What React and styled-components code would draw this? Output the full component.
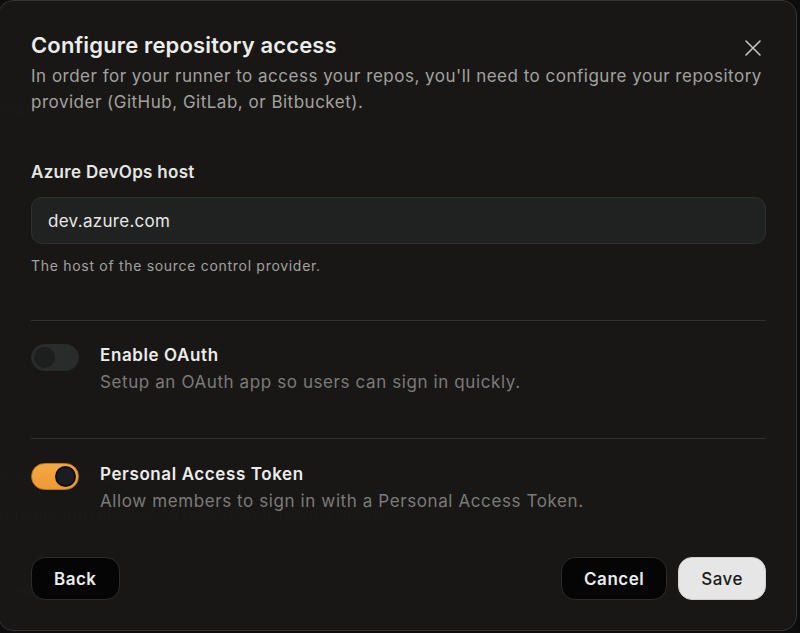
import styled, { createGlobalStyle, css } from "styled-components";

const GlobalStyle = createGlobalStyle`
    html, body { margin : 0; padding : 0; background : #0d0d0d; }
    body { font-family : Inter, "Noto Sans", "Liberation Sans", sans-serif; -webkit-font-smoothing : antialiased; }
`;

const Page = styled.div`
    position : relative; width : 800px; height : 633px; overflow : hidden;
`;
const Backdrop = styled.div`
    display : flex; flex-direction : column;
    padding : 98px 0 0 0; margin-left : -40px;
    color : #2a2a2a; font-size : 17px; line-height : 24px;
`;
const GhostLine = styled.div`
    margin-top : ${(props) => props.$gap || 0}px;
    white-space : nowrap;
`;

const Dialog = styled.div`
    position : absolute; top : 0; left : -2px;
    width : 799px; height : 631px; box-sizing : border-box;
    background : rgba(25, 24, 23, 0.95);
    border : 1px solid #343434; border-radius : 15px;
    padding : 30px 30px 0 32px;
    display : flex; flex-direction : column;
`;
const Header = styled.div`
    position : relative;
    display : flex; flex-direction : column; gap : 4px;
`;
const Title = styled.h2`
    margin : 0; font-size : 22px; line-height : 28px; font-weight : 600;
    color : #ececea; letter-spacing : 0.15px;
`;
const Description = styled.p`
    margin : 0; font-size : 17px; line-height : 26px; color : #a3a29e;
    letter-spacing : 0.5px;
`;
const CloseButton = styled.button`
    position : absolute; top : 5px; right : 1px;
    width : 24px; height : 24px; padding : 0; border : 0; background : none;
    display : flex; align-items : center; justify-content : center; cursor : pointer;
`;

const Field = styled.div`
    display : flex; flex-direction : column; margin-top : 45px;
`;
const Label = styled.label`
    font-size : 17px; line-height : 24px; font-weight : 600; color : #e6e6e4;
    letter-spacing : 0.3px;
`;
const Input = styled.input`
    margin-top : 13px; height : 47px; box-sizing : border-box;
    background : #202221; border : 1px solid #2e3030; border-radius : 11px;
    padding : 0 16px; font-family : inherit; font-size : 17px; color : #e8e8e6;
    letter-spacing : 0.3px; outline : none;
`;
const Helper = styled.div`
    margin-top : 12px; font-size : 14px; line-height : 20px; color : #a3a29e;
    letter-spacing : 0.7px;
`;
const Divider = styled.hr`
    margin : ${(props) => props.$top}px 0 0 0; border : 0; height : 1px; background : #2e3031;
`;
const OptionRow = styled.div`
    display : flex; gap : 21px; margin-top : ${(props) => props.$top}px;
`;
const Toggle = styled.div`
    flex : none; width : 48px; height : 27px; box-sizing : border-box; margin-top : 1px;
    border-radius : 14px; position : relative;
    ${(props) => props.$on ? css`
        background : linear-gradient(#f5a842, #ec9a34);
        border : 1px solid #b87626;
    ` : css`
        background : #2a2c2c;
        border : 1px solid #2a2c2c;
    `}
`;
const Knob = styled.span`
    position : absolute; top : 2px; width : 21px; height : 21px; box-sizing : border-box;
    border-radius : 50%;
    ${(props) => props.$on ? css`
        left : 23px; background : #1c1d20; border : 2px solid #0f0f10;
    ` : css`
        left : 2px; background : #1d1e1e;
    `}
`;
const OptionText = styled.div`
    display : flex; flex-direction : column; gap : 3px;
`;
const OptionTitle = styled.div`
    font-size : 17px; line-height : 24px; font-weight : 600; color : #ececea;
    letter-spacing : 0.6px;
`;
const OptionDesc = styled.div`
    font-size : 17px; line-height : 24px; color : #7c7b78;
    letter-spacing : 0.6px;
`;

const Footer = styled.div`
    display : flex; justify-content : space-between; align-items : center;
    margin-top : 44px;
`;
const Actions = styled.div`
    display : flex; gap : 11px;
`;
const Button = styled.button`
    height : 43px; box-sizing : border-box; padding : 0 22px;
    border-radius : 14px; font-family : inherit; font-size : 17px; cursor : pointer;
    letter-spacing : 0.5px;
    ${(props) => props.$primary ? css`
        background : #e6e6e6; color : #1a1a1a; border : 1px solid #d0d0d0; font-weight : 500;
    ` : css`
        background : #050505; color : #ececec; border : 1px solid #2c2c2c; font-weight : 600;
    `}
`;

const CloseIcon = () => (
    <svg width="18" height="18" viewBox="0 0 18 18" fill="none">
        <path d="M2 2 L16 16 M16 2 L2 16" stroke="#c4c4c2" strokeWidth="1.6" strokeLinecap="round" />
    </svg>
);

const App = () => {
    return (<>
        <GlobalStyle />
        <Page>
            <Backdrop>
                <GhostLine>Personal Access Token</GhostLine>
                <GhostLine $gap={344}>Organization classes</GhostLine>
                <GhostLine $gap={13}>Group users into classes to match your team's needs.</GhostLine>
                <GhostLine $gap={52}>Allow usage</GhostLine>
            </Backdrop>
            <Dialog>
                <Header>
                    <Title>Configure repository access</Title>
                    <Description>
                        In order for your runner to access your repos, you'll need to configure your repository provider (GitHub, GitLab, or Bitbucket).
                    </Description>
                    <CloseButton aria-label="Close"><CloseIcon /></CloseButton>
                </Header>

                <Field>
                    <Label>Azure DevOps host</Label>
                    <Input defaultValue="dev.azure.com" />
                    <Helper>The host of the source control provider.</Helper>
                </Field>

                <Divider $top={44} />
                <OptionRow $top={22}>
                    <Toggle><Knob /></Toggle>
                    <OptionText>
                        <OptionTitle>Enable OAuth</OptionTitle>
                        <OptionDesc>Setup an OAuth app so users can sign in quickly.</OptionDesc>
                    </OptionText>
                </OptionRow>

                <Divider $top={44} />
                <OptionRow $top={23}>
                    <Toggle $on><Knob $on /></Toggle>
                    <OptionText>
                        <OptionTitle>Personal Access Token</OptionTitle>
                        <OptionDesc>Allow members to sign in with a Personal Access Token.</OptionDesc>
                    </OptionText>
                </OptionRow>

                <Footer>
                    <Button>Back</Button>
                    <Actions>
                        <Button>Cancel</Button>
                        <Button $primary>Save</Button>
                    </Actions>
                </Footer>
            </Dialog>
        </Page>
    </>);
};
export default App;
